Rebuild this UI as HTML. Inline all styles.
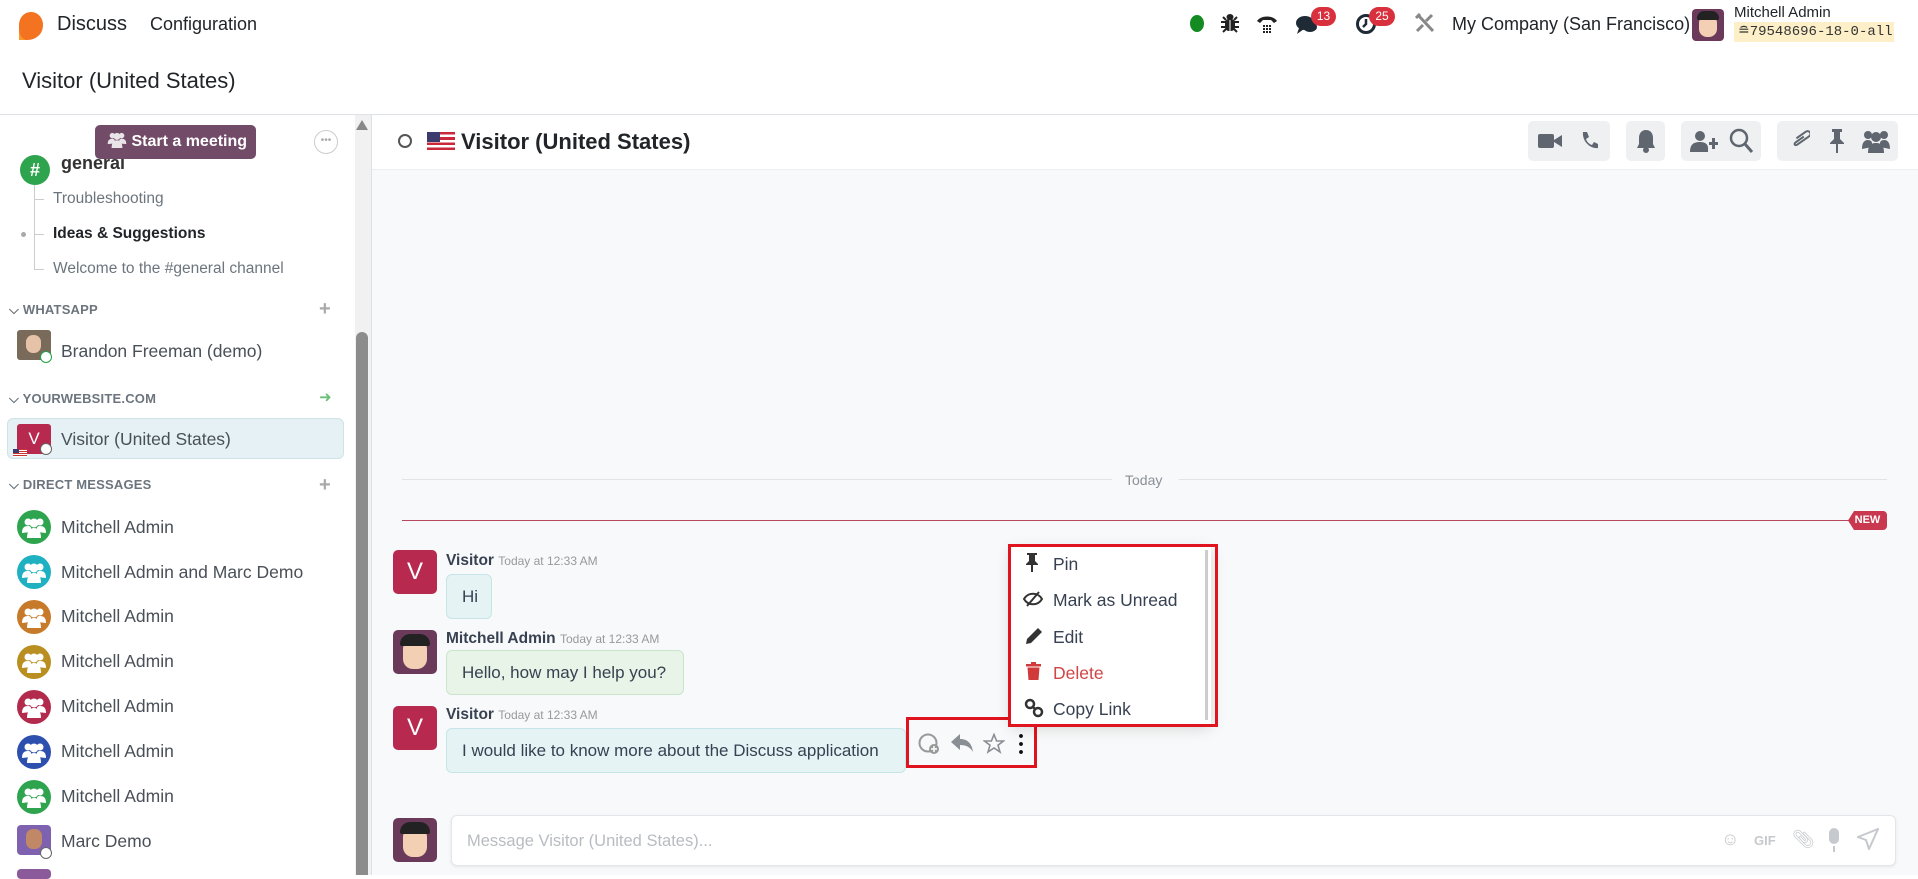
<!DOCTYPE html>
<html><head><meta charset="utf-8"><style>
*{box-sizing:border-box;margin:0;padding:0}
body{width:1918px;height:875px;overflow:hidden;background:#fff;font-family:"Liberation Sans",sans-serif;color:#374151;position:relative}
.a{position:absolute;white-space:nowrap}
.sec{font-size:13px;font-weight:bold;color:#6c757d;letter-spacing:.2px}
.dm{font-size:17.5px;color:#495057}
.grp{position:absolute;top:121px;height:40px;background:#eef0f2;border-radius:5px}
.ic{position:absolute;fill:#5f6670}
.av{position:absolute;width:44px;height:44px;border-radius:5px;background:#b7294e;color:#fff;font-size:24px;text-align:center;line-height:44px}
.bub{position:absolute;border-radius:6px;font-size:17px;line-height:43px;padding:0 15px;color:#374151;white-space:nowrap}
.mi{position:absolute;left:1053px;font-size:17.5px;color:#374151}
.grpav{position:absolute;width:34px;height:34px;border-radius:50%}
.grpav svg{position:absolute;left:5px;top:6px}
</style></head><body>
<svg width="0" height="0" style="position:absolute"><defs><g id="ppl" fill="#fff"><circle cx="6" cy="6" r="3.5"/><circle cx="18" cy="6" r="3.5"/><circle cx="12" cy="7" r="4.5"/><path d="M0 17C0 12 2 10 6 10C8 10 9 11 9 12V16ZM24 17C24 12 22 10 18 10C16 10 15 11 15 12V16Z"/><path d="M5 22C5 15 8 12 12 12S19 15 19 22Z"/></g></defs></svg>
<!-- top nav -->
<svg class="a" style="left:16px;top:10px" width="30" height="32" viewBox="0 0 30 32"><path d="M15 2C22 2 27 8 27 15C27 24 20 30 11 30L3 30L3 15C3 8 8 2 15 2Z" fill="#f47321"/><path d="M3 18C3 24 6 30 11 30L3 30Z" fill="#f99b2b"/></svg>
<div class="a" style="left:57px;top:13px;font-size:20px;color:#212529">Discuss</div>
<div class="a" style="left:150px;top:14px;font-size:18px;color:#212529">Configuration</div>
<div class="a" style="left:1190px;top:15px;width:14px;height:17px;border-radius:50%;background:#138a22"></div>
<svg class="a" style="left:1221px;top:12px" width="18" height="22" viewBox="0 0 18 22"><ellipse cx="9" cy="5" rx="3.5" ry="3" fill="#222"/><rect x="4" y="7" width="10" height="12" rx="4" fill="#222"/><path d="M0 10H18M0 15H18M2 20L5 17M16 20L13 17M2 5L5 8M16 5L13 8" stroke="#222" stroke-width="2"/><path d="M9 8V19" stroke="#fff" stroke-width="1"/></svg>
<svg class="a" style="left:1256px;top:13px" width="22" height="22" viewBox="0 0 22 22"><path d="M1 8C5 2 17 2 21 8L18 10L15 7H7L4 10Z" fill="#222"/><g fill="#222"><rect x="7" y="12" width="2" height="2"/><rect x="10" y="12" width="2" height="2"/><rect x="13" y="12" width="2" height="2"/><rect x="7" y="15" width="2" height="2"/><rect x="10" y="15" width="2" height="2"/><rect x="13" y="15" width="2" height="2"/><rect x="7" y="18" width="2" height="2"/><rect x="10" y="18" width="2" height="2"/><rect x="13" y="18" width="2" height="2"/></g></svg>
<svg class="a" style="left:1295px;top:14px" width="24" height="22" viewBox="0 0 24 22"><ellipse cx="10" cy="9" rx="9" ry="7" fill="#1f2a37"/><path d="M4 14L2 20L9 15Z" fill="#1f2a37"/><ellipse cx="15" cy="13" rx="7" ry="5" fill="#1f2a37"/></svg>
<div class="a" style="left:1311px;top:7px;width:25px;height:19px;border-radius:10px;background:#d9303e;color:#fff;font-size:12px;text-align:center;line-height:19px">13</div>
<svg class="a" style="left:1355px;top:13px" width="22" height="22" viewBox="0 0 22 22"><circle cx="11" cy="11" r="8.5" fill="none" stroke="#1f2a37" stroke-width="3"/><path d="M11 6V11L8 14" stroke="#1f2a37" stroke-width="2.5" fill="none"/></svg>
<div class="a" style="left:1369px;top:7px;width:26px;height:19px;border-radius:10px;background:#d9303e;color:#fff;font-size:12px;text-align:center;line-height:19px">25</div>
<svg class="a" style="left:1415px;top:13px" width="20" height="20" viewBox="0 0 20 20"><path d="M3 2L18 18M17 2L11 8M8 12L2 18" stroke="#888" stroke-width="3"/><path d="M1 5L5 1" stroke="#888" stroke-width="3"/></svg>
<div class="a" style="left:1452px;top:14px;font-size:18px;color:#212529">My Company (San Francisco)</div>
<div class="a" style="left:1692px;top:9px;width:32px;height:32px;border-radius:4px;background:#6b3a5b"><div style="position:absolute;left:7px;top:6px;width:18px;height:22px;border-radius:8px;background:#f3cfb3"></div><div style="position:absolute;left:5px;top:2px;width:22px;height:9px;border-radius:8px 8px 2px 2px;background:#222"></div></div>
<div class="a" style="left:1734px;top:4px;font-size:15px;color:#212529">Mitchell Admin</div>
<div class="a" style="left:1734px;top:22px;height:20px;width:160px;background:#fdf0c8;font-family:'Liberation Mono',monospace;font-size:14px;line-height:20px;padding-left:4px;color:#333">≘79548696-18-0-all</div>
<div class="a" style="left:22px;top:68px;font-size:22px;color:#212529">Visitor (United States)</div>
<div class="a" style="left:0;top:114px;width:1918px;height:1px;background:#dee2e6"></div>

<!-- sidebar -->
<div class="a" style="left:355px;top:115px;width:16px;height:760px;background:#f1f1f1"></div>
<div class="a" style="left:356px;top:332px;width:12px;height:543px;background:#8c8c8c;border-radius:6px 6px 0 0"></div>
<div class="a" style="left:356px;top:120px;width:0;height:0;border-left:6px solid transparent;border-right:6px solid transparent;border-bottom:10px solid #888"></div>
<div class="a" style="left:371px;top:115px;width:1px;height:760px;background:#dee2e6"></div>
<div class="a" style="left:20px;top:155px;width:30px;height:30px;border-radius:50%;background:#2ea44f;color:#fff;font-weight:bold;text-align:center;line-height:30px;font-size:18px">#</div>
<div class="a" style="left:61px;top:153px;font-size:18px;font-weight:bold;color:#333">general</div>
<div class="a" style="left:95px;top:125px;width:161px;height:34px;border-radius:5px;background:#714b67;color:#fff;font-size:16px;font-weight:bold;line-height:34px;padding-left:12px"><svg width="20" height="17" viewBox="0 0 24 22" style="vertical-align:-2px;opacity:.85"><use href="#ppl"/></svg> Start a meeting</div>
<div class="a" style="left:314px;top:130px;width:24px;height:24px;border-radius:50%;border:1px solid #ccc;color:#aaa;font-size:10px;text-align:center;line-height:20px">•••</div>
<div class="a" style="left:34px;top:185px;width:1px;height:84px;background:#ccc"></div>
<div class="a" style="left:34px;top:199px;width:10px;height:1px;background:#ccc"></div>
<div class="a" style="left:34px;top:234px;width:10px;height:1px;background:#ccc"></div>
<div class="a" style="left:34px;top:269px;width:10px;height:1px;background:#ccc"></div>
<div class="a" style="left:21px;top:232px;width:5px;height:5px;border-radius:50%;background:#aaa"></div>
<div class="a" style="left:53px;top:190px;font-size:15.5px;color:#6c757d">Troubleshooting</div>
<div class="a" style="left:53px;top:225px;font-size:15.5px;font-weight:bold;color:#212529">Ideas &amp; Suggestions</div>
<div class="a" style="left:53px;top:260px;font-size:15.5px;color:#6c757d">Welcome to the #general channel</div>

<div class="a sec" style="left:9px;top:302px">⌵ WHATSAPP</div><div class="a" style="left:319px;top:298px;font-size:20px;color:#aaa;font-weight:bold">+</div>
<div class="a" style="left:17px;top:330px;width:34px;height:30px;border-radius:3px;background:#7a6a5a"><div style="margin:5px 9px;width:15px;height:18px;border-radius:7px;background:#e6c2a8"></div></div>
<div class="a" style="left:40px;top:351px;width:12px;height:12px;border-radius:50%;background:#fff;border:1.5px solid #25a244"></div>
<div class="a dm" style="left:61px;top:341px">Brandon Freeman (demo)</div>
<div class="a sec" style="left:9px;top:391px">⌵ YOURWEBSITE.COM</div><div class="a" style="left:319px;top:388px;font-size:15px;color:#6cc07a">➜</div>
<div class="a" style="left:7px;top:418px;width:337px;height:41px;border-radius:6px;background:#e5f1f4;border:1px solid #cfe2e7"></div>
<div class="a" style="left:17px;top:424px;width:34px;height:30px;border-radius:3px;background:#b7294e;color:#fff;font-size:17px;text-align:center;line-height:30px">V</div>
<div class="a" style="left:13px;top:449px;width:14px;height:8px;background:repeating-linear-gradient(#c33 0 1px,#fff 1px 2px)"><div style="width:6px;height:4px;background:#3c3b6e"></div></div>
<div class="a" style="left:40px;top:443px;width:12px;height:12px;border-radius:50%;background:#fff;border:1.5px solid #666"></div>
<div class="a dm" style="left:61px;top:429px">Visitor (United States)</div>
<div class="a sec" style="left:9px;top:477px">⌵ DIRECT MESSAGES</div><div class="a" style="left:319px;top:474px;font-size:20px;color:#aaa;font-weight:bold">+</div>

<div class="grpav" style="left:17px;top:510px;background:#2ea44f"><svg width="24" height="22"><use href="#ppl"/></svg></div><div class="a dm" style="left:61px;top:517px">Mitchell Admin</div>
<div class="grpav" style="left:17px;top:555px;background:#1fb1c2"><svg width="24" height="22"><use href="#ppl"/></svg></div><div class="a dm" style="left:61px;top:562px">Mitchell Admin and Marc Demo</div>
<div class="grpav" style="left:17px;top:600px;background:#c77a2a"><svg width="24" height="22"><use href="#ppl"/></svg></div><div class="a dm" style="left:61px;top:606px">Mitchell Admin</div>
<div class="grpav" style="left:17px;top:645px;background:#b98f22"><svg width="24" height="22"><use href="#ppl"/></svg></div><div class="a dm" style="left:61px;top:651px">Mitchell Admin</div>
<div class="grpav" style="left:17px;top:690px;background:#b32b4c"><svg width="24" height="22"><use href="#ppl"/></svg></div><div class="a dm" style="left:61px;top:696px">Mitchell Admin</div>
<div class="grpav" style="left:17px;top:735px;background:#2d4fae"><svg width="24" height="22"><use href="#ppl"/></svg></div><div class="a dm" style="left:61px;top:741px">Mitchell Admin</div>
<div class="grpav" style="left:17px;top:780px;background:#2ea44f"><svg width="24" height="22"><use href="#ppl"/></svg></div><div class="a dm" style="left:61px;top:786px">Mitchell Admin</div>
<div class="a" style="left:17px;top:825px;width:34px;height:30px;border-radius:4px;background:#7e62b0"><div style="margin:4px 9px;width:16px;height:20px;border-radius:7px;background:#c08866"></div></div>
<div class="a" style="left:40px;top:847px;width:12px;height:12px;border-radius:50%;background:#fff;border:1.5px solid #666"></div>
<div class="a dm" style="left:61px;top:831px">Marc Demo</div>
<div class="a" style="left:17px;top:869px;width:34px;height:10px;border-radius:4px;background:#8a5a9a"></div>

<!-- thread -->
<div class="a" style="left:372px;top:170px;width:1546px;height:705px;background:#f8f9fa"></div>
<div class="a" style="left:372px;top:169px;width:1546px;height:1px;background:#eceef0"></div>
<div class="a" style="left:398px;top:134px;width:14px;height:14px;border-radius:50%;border:2px solid #555"></div>
<div class="a" style="left:427px;top:132px;width:28px;height:18px;background:repeating-linear-gradient(#c8283a 0 2.6px,#fff 2.6px 5.2px)"><div style="width:13px;height:10px;background:#3c3b6e"></div></div>
<div class="a" style="left:461px;top:129px;font-size:22px;font-weight:bold;color:#212529">Visitor (United States)</div>
<div class="grp" style="left:1528px;width:82px"></div><div class="grp" style="left:1626px;width:39px"></div><div class="grp" style="left:1681px;width:80px"></div><div class="grp" style="left:1777px;width:121px"></div>
<svg class="ic" style="left:1538px;top:132px" width="24" height="18"><rect x="0" y="2" width="16" height="14" rx="2"/><path d="M16 8L24 3V15L16 10Z"/></svg>
<svg class="ic" style="left:1580px;top:131px" width="18" height="20"><path d="M3 1L7 1L9 6L6 8C7 11 9 13 12 14L14 11L18 13L18 17C10 18 2 10 3 1Z"/></svg>
<svg class="ic" style="left:1636px;top:129px" width="20" height="24"><path d="M10 1C5 1 3 5 3 9V15L1 19H19L17 15V9C17 5 15 1 10 1Z"/><circle cx="10" cy="21" r="3"/></svg>
<svg class="ic" style="left:1690px;top:130px" width="30" height="22"><circle cx="10" cy="6" r="5"/><path d="M0 22C0 14 4 12 10 12C15 12 18 14 18 18V22Z"/><rect x="19" y="12" width="9" height="3"/><rect x="22" y="8" width="3" height="11"/></svg>
<svg class="a" style="left:1729px;top:128px" width="24" height="26"><circle cx="10" cy="10" r="8" fill="none" stroke="#5f6670" stroke-width="2.5"/><path d="M16 16L23 24" stroke="#5f6670" stroke-width="3"/></svg>
<svg class="a" style="left:1790px;top:129px" width="20" height="24"><path d="M6 10L14 2C17 -1 21 3 18 6L8 16C6 18 4 16 6 14L13 7" fill="none" stroke="#5f6670" stroke-width="2" transform="rotate(10 10 12)"/></svg>
<svg class="ic" style="left:1829px;top:129px" width="16" height="24"><path d="M3 0H13V3H11V10L15 14V15H1V14L5 10V3H3Z"/><rect x="7" y="15" width="2" height="9"/></svg>
<svg class="ic" style="left:1862px;top:129px" width="28" height="24"><circle cx="6" cy="6" r="4"/><circle cx="22" cy="6" r="4"/><circle cx="14" cy="8" r="5"/><path d="M0 20C0 13 3 11 6 11S10 13 10 14V18ZM28 20C28 13 25 11 22 11S18 13 18 14V18Z"/><path d="M6 24C6 16 9 14 14 14S22 16 22 24Z"/></svg>

<div class="a" style="left:402px;top:479px;width:710px;height:1px;background:#e1e4e7"></div>
<div class="a" style="left:1179px;top:479px;width:708px;height:1px;background:#e1e4e7"></div>
<div class="a" style="left:1125px;top:472px;font-size:14px;color:#8a9097">Today</div>
<div class="a" style="left:402px;top:520px;width:1450px;height:1px;background:#b8485e"></div>
<div class="a" style="left:1848px;top:511px;width:39px;height:19px;background:#c9384f;color:#fff;font-size:11px;font-weight:bold;text-align:center;line-height:19px;border-radius:4px;clip-path:polygon(6px 0,100% 0,100% 100%,6px 100%,0 50%)">NEW</div>

<div class="av" style="left:393px;top:550px">V</div>
<div class="a" style="left:446px;top:552px;font-size:15.5px;font-weight:bold;color:#374151">Visitor <span style="font-weight:normal;font-size:12px;color:#999">Today at 12:33 AM</span></div>
<div class="bub" style="left:446px;top:574px;width:46px;height:45px;background:#e6f3f5;border:1px solid #c7e4e9">Hi</div>
<div class="a" style="left:393px;top:630px;width:44px;height:44px;border-radius:5px;background:#6b3a5b"><div style="position:absolute;left:10px;top:9px;width:24px;height:30px;border-radius:10px;background:#f3cfb3"></div><div style="position:absolute;left:7px;top:4px;width:30px;height:12px;border-radius:10px 10px 2px 2px;background:#222"></div></div>
<div class="a" style="left:446px;top:630px;font-size:15.5px;font-weight:bold;color:#374151">Mitchell Admin <span style="font-weight:normal;font-size:12px;color:#999">Today at 12:33 AM</span></div>
<div class="bub" style="left:446px;top:650px;width:238px;height:45px;background:#e8f4e8;border:1px solid #cbe5cc">Hello, how may I help you?</div>
<div class="av" style="left:393px;top:706px">V</div>
<div class="a" style="left:446px;top:706px;font-size:15.5px;font-weight:bold;color:#374151">Visitor <span style="font-weight:normal;font-size:12px;color:#999">Today at 12:33 AM</span></div>
<div class="bub" style="left:446px;top:728px;width:460px;height:45px;background:#e6f3f5;border:1px solid #c7e4e9">I would like to know more about the Discuss application</div>

<div class="a" style="left:906px;top:717px;width:131px;height:51px;border:3px solid #e0141e"></div>
<svg class="a" style="left:918px;top:733px" width="22" height="22"><circle cx="10" cy="10" r="8.5" fill="none" stroke="#999" stroke-width="2"/><circle cx="16" cy="16" r="5" fill="#999"/><path d="M16 13V19M13 16H19" stroke="#fff" stroke-width="1.5"/></svg>
<svg class="a" style="left:950px;top:733px" width="24" height="20"><path d="M10 1L1 9L10 17V12C16 12 20 14 23 19C22 11 18 6 10 6Z" fill="#8a8f95"/></svg>
<svg class="a" style="left:983px;top:733px" width="22" height="22"><path d="M11 1.5L13.6 8H20.5L15 12.2L17 19L11 15L5 19L7 12.2L1.5 8H8.4Z" fill="none" stroke="#8a8f95" stroke-width="1.6"/></svg>
<div class="a" style="left:1019px;top:732px;width:4px;height:22px;background:radial-gradient(circle,#111 1.8px,transparent 2px) 0 0/4px 8px"></div>

<div class="a" style="left:1011px;top:546px;width:200px;height:178px;background:#fff;box-shadow:0 4px 14px rgba(0,0,0,.15)"></div>
<div class="a" style="left:1008px;top:544px;width:210px;height:183px;border:3px solid #e0141e"></div>
<div class="a" style="left:1205px;top:550px;width:3px;height:170px;background:#ccc"></div>
<svg class="ic" style="left:1025px;top:553px;fill:#333" width="14" height="20"><path d="M2 0H12V2H10V8L13 11V12H1V11L4 8V2H2Z"/><rect x="6" y="12" width="2" height="7"/></svg>
<div class="mi" style="top:554px">Pin</div>
<svg class="a" style="left:1023px;top:591px" width="20" height="16"><path d="M1 8C5 1 15 1 19 8C15 15 5 15 1 8Z" fill="none" stroke="#333" stroke-width="2"/><path d="M4 15L16 1" stroke="#333" stroke-width="2"/></svg>
<div class="mi" style="top:590px">Mark as Unread</div>
<svg class="a" style="left:1025px;top:627px" width="18" height="18"><path d="M13 1L17 5L6 16L1 17L2 12Z" fill="#333"/></svg>
<div class="mi" style="top:627px">Edit</div>
<svg class="a" style="left:1026px;top:662px" width="15" height="18"><rect x="0" y="2" width="15" height="2.5" fill="#d13a3a"/><rect x="5" y="0" width="5" height="2" fill="#d13a3a"/><path d="M1.5 5.5H13.5L12.5 18H2.5Z" fill="#d13a3a"/></svg>
<div class="mi" style="top:663px;color:#d04545">Delete</div>
<svg class="a" style="left:1024px;top:698px" width="20" height="20"><circle cx="6" cy="6" r="4" fill="none" stroke="#333" stroke-width="2.5"/><circle cx="14" cy="14" r="4" fill="none" stroke="#333" stroke-width="2.5"/><path d="M8 8L12 12" stroke="#333" stroke-width="2.5"/></svg>
<div class="mi" style="top:699px">Copy Link</div>

<div class="a" style="left:393px;top:818px;width:44px;height:44px;border-radius:5px;background:#6b3a5b"><div style="position:absolute;left:10px;top:9px;width:24px;height:30px;border-radius:10px;background:#f3cfb3"></div><div style="position:absolute;left:7px;top:4px;width:30px;height:12px;border-radius:10px 10px 2px 2px;background:#222"></div></div>
<div class="a" style="left:451px;top:815px;width:1445px;height:51px;background:#fff;border:1px solid #e3e6ea;border-radius:6px;box-shadow:0 1px 3px rgba(0,0,0,.08)"></div>
<div class="a" style="left:467px;top:832px;font-size:16.5px;color:#b8bcc1">Message Visitor (United States)...</div>
<div class="a" style="left:1721px;top:829px;font-size:18px;color:#c6c9cd">☺</div>
<div class="a" style="left:1754px;top:833px;font-size:13px;font-weight:bold;color:#c6c9cd">GIF</div>
<div class="a" style="left:1792px;top:829px;font-size:18px;color:#c6c9cd">📎︎</div>
<div class="a" style="left:1829px;top:828px;width:10px;height:16px;border-radius:5px;background:#c6c9cd"></div>
<div class="a" style="left:1833px;top:846px;width:2px;height:6px;background:#c6c9cd"></div>
<svg class="a" style="left:1857px;top:828px" width="22" height="22"><path d="M21 1L1 9L9 12L12 21Z" fill="none" stroke="#c6c9cd" stroke-width="2"/></svg>
</body></html>
